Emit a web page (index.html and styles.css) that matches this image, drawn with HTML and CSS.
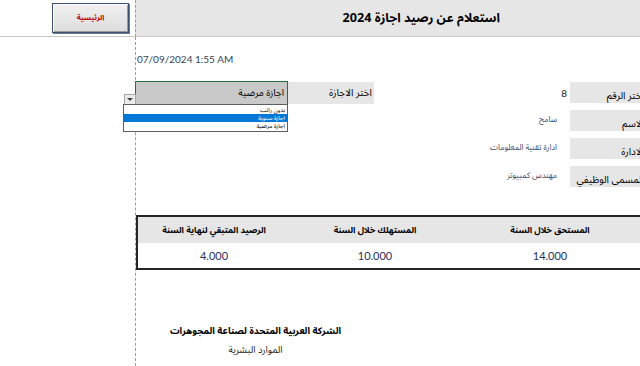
FILE: index.html
```html
<!DOCTYPE html>
<html lang="ar">
<head>
<meta charset="utf-8">
<title>استعلام عن رصيد اجازة 2024</title>
<link rel="stylesheet" href="styles.css">
</head>
<body>
<div class="sheet">
  <div class="corner">
    <button class="home-btn" type="button">الرئيسية</button>
  </div>
  <header class="banner">
    <h1 class="title">استعلام عن رصيد اجازة 2024</h1>
  </header>
  <div class="margin-col"></div>
  <main class="area">
    <div class="stamp">07/09/2024 1:55 AM</div>
    <div class="form">
      <div class="left-block">
        <div class="select-cell">
          <span class="arrow-btn"><span class="tri"></span></span>
          <span class="select-text">اجازة مرضية</span>
          <ul class="drop-list">
            <li>بدون راتب</li>
            <li class="active">اجازة سنوية</li>
            <li>اجازة مرضية</li>
          </ul>
        </div>
        <div class="select-label">اختر الاجازة</div>
      </div>
      <div class="fields">
        <div class="field-row">
          <span class="value num">8</span>
          <span class="label"><span class="label-text">اختر الرقم</span></span>
        </div>
        <div class="field-row">
          <span class="value">سامح</span>
          <span class="label"><span class="label-text">الاسم</span></span>
        </div>
        <div class="field-row">
          <span class="value">ادارة تقنية المعلومات</span>
          <span class="label"><span class="label-text">الادارة</span></span>
        </div>
        <div class="field-row">
          <span class="value">مهندس كمبيوتر</span>
          <span class="label"><span class="label-text">المسمى الوظيفي</span></span>
        </div>
      </div>
    </div>
    <table class="balance" dir="rtl">
      <colgroup>
        <col class="c-due">
        <col class="c-used">
        <col class="c-left">
      </colgroup>
      <thead>
        <tr>
          <th>المستحق خلال السنة</th>
          <th>المستهلك خلال السنة</th>
          <th>الرصيد المتبقي لنهاية السنة</th>
        </tr>
      </thead>
      <tbody>
        <tr>
          <td>14.000</td>
          <td>10.000</td>
          <td>4.000</td>
        </tr>
      </tbody>
    </table>
    <div class="footer">
      <div class="company">الشركة العربية المتحدة لصناعة المجوهرات</div>
      <div class="dept">الموارد البشرية</div>
    </div>
  </main>
</div>
</body>
</html>
```

FILE: styles.css
```css
* {
  box-sizing: border-box;
  margin: 0;
  padding: 0;
}

html,
body {
  width: 640px;
  height: 366px;
  overflow: hidden;
  background: #ffffff;
}

body {
  font-family: Lato, "Noto Sans Arabic", "DejaVu Sans", sans-serif;
  color: #000000;
}

.home-btn,
.title,
.select-text,
.drop-list li,
.select-label,
.value,
.label-text,
.balance th,
.footer {
  font-family: "Noto Sans Arabic", "DejaVu Sans", sans-serif;
}

.sheet {
  display: grid;
  grid-template-columns: 135px 505px;
  grid-template-rows: 37px 329px;
}

.corner {
  border-bottom: 1px solid #c8c8c8;
  padding: 3px 0 0 52px;
}

.home-btn {
  width: 77px;
  height: 30px;
  border: 1px solid #3f4f6e;
  background: linear-gradient(#f1f1f1, #dcdcdc);
  box-shadow: inset 1px 1px 0 #ffffff, inset -1px -1px 0 #9a9a9a, 1px 1px 0 #6c7a94;
  color: #c00000;
  font-weight: bold;
  font-size: 7.5px;
  display: flex;
  align-items: center;
  justify-content: center;
  cursor: pointer;
}

.banner {
  background: #e7e6e6;
  border-left: 1px dashed #9c9c9c;
  border-bottom: 1px solid #c8c8c8;
  display: flex;
  align-items: center;
  justify-content: flex-end;
  padding-right: 140px;
}

.title {
  font-size: 12.6px;
  font-weight: bold;
  line-height: 18px;
  color: #000000;
}

.area {
  border-left: 1px dashed #9c9c9c;
  padding-top: 16px;
  display: flex;
  flex-direction: column;
}

.stamp {
  font-size: 10px;
  line-height: 12px;
  color: #333f5c;
  padding-left: 1px;
}

.form {
  margin-top: 16px;
  display: flex;
  align-items: flex-start;
}

.left-block {
  width: 239px;
  display: flex;
  align-items: flex-start;
}

.select-cell {
  position: relative;
  width: 153px;
  height: 24px;
  margin-left: -1px;
  border: 1px solid #217346;
  background: #c9c9c9;
  display: flex;
  align-items: center;
  justify-content: flex-end;
  padding-right: 3px;
}

.select-text {
  font-size: 9.6px;
}

.arrow-btn {
  position: absolute;
  right: 100%;
  bottom: -1px;
  width: 12px;
  height: 11px;
  border: 1px solid #a6a6a6;
  background: #ececec;
  display: flex;
  align-items: center;
  justify-content: center;
}

.tri {
  width: 0;
  height: 0;
  border-left: 3px solid transparent;
  border-right: 3px solid transparent;
  border-top: 3px solid #404040;
}

.drop-list {
  position: absolute;
  top: 100%;
  left: -13px;
  width: 165px;
  list-style: none;
  background: #ffffff;
  border: 1px solid #5f5f5f;
  padding: 1px 0;
}

.drop-list li {
  height: 8px;
  line-height: 8px;
  font-size: 6px;
  text-align: right;
  padding-right: 2px;
  color: #000000;
}

.drop-list li.active {
  background: #0078d7;
  color: #ffffff;
}

.select-label {
  margin-top: 1px;
  width: 86px;
  height: 22px;
  background: #e7e6e6;
  font-size: 10px;
  line-height: 22px;
  text-align: right;
  padding-right: 2px;
}

.fields {
  flex: 1;
  margin-top: 1px;
  display: flex;
  flex-direction: column;
  gap: 7px;
}

.field-row {
  display: flex;
  justify-content: flex-end;
  height: 21px;
}

.value {
  width: 140px;
  line-height: 19px;
  text-align: right;
  padding-right: 13px;
  font-size: 8px;
  color: #3d4a66;
}

.value.num {
  line-height: 23px;
  padding-right: 3px;
  font-family: Lato, sans-serif;
  font-size: 10px;
  color: #1a1a1a;
}

.label {
  width: 70px;
  background: #e7e6e6;
  text-align: right;
  line-height: 22px;
  white-space: nowrap;
}

.label-text {
  display: inline-block;
  margin-right: -4px;
  font-size: 10px;
}

.balance {
  margin-top: 28px;
  width: 504px;
  border-collapse: separate;
  border-spacing: 0;
  table-layout: fixed;
  border-top: 2px solid #262626;
  border-bottom: 2px solid #262626;
  border-left: 2px solid #262626;
  border-right: 0;
}

.c-due {
  width: 180px;
}

.c-used {
  width: 170px;
}

.c-left {
  width: 152px;
}

.balance th {
  height: 26px;
  background: #e7e6e6;
  font-size: 8.6px;
  font-weight: bold;
  text-align: center;
}

.balance td {
  height: 25px;
  font-family: Lato, sans-serif;
  font-size: 11px;
  color: #1f3060;
  text-align: center;
}

.footer {
  width: 239px;
  margin-top: 54px;
  text-align: center;
}

.company {
  font-size: 9.5px;
  font-weight: bold;
  line-height: 14px;
}

.dept {
  margin-top: 5px;
  font-size: 9.5px;
  line-height: 14px;
  color: #222222;
}
```
